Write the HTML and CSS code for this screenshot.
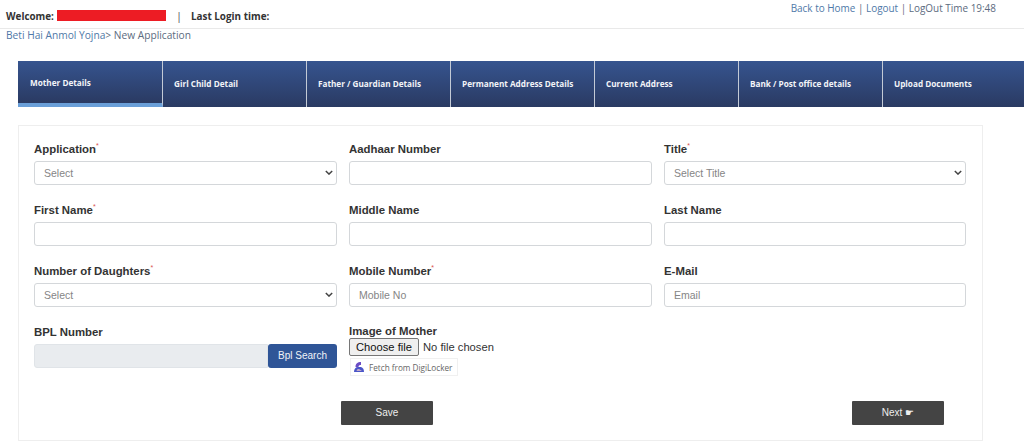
FILE: index.html
```html
<!DOCTYPE html>
<html lang="en">
<head>
    <meta charset="UTF-8">
    <title>Beti Hai Anmol Yojna - New Application</title>
    <link rel="stylesheet" href="styles.css">
</head>
<body>
<div class="topBar">
    <div class="welcome">
        <b>Welcome:</b><span class="redacted"></span><span class="sep">|</span><b>Last Login time:</b>
    </div>
    <div class="topLinks">
        <a>Back to Home</a> | <a>Logout</a> | <span>LogOut Time 19:48</span>
    </div>
</div>
<div class="crumbs"><a>Beti Hai Anmol Yojna</a>&gt; <span>New Application</span></div>

<div class="tabs">
    <div class="tab active">Mother Details</div>
    <div class="tab">Girl Child Detail</div>
    <div class="tab">Father / Guardian Details</div>
    <div class="tab">Permanent Address Details</div>
    <div class="tab">Current Address</div>
    <div class="tab">Bank / Post office details</div>
    <div class="tab">Upload Documents</div>
</div>

<div class="card">
    <div class="formGrid">
        <div class="field">
            <label>Application<sup>*</sup></label>
            <div class="control selectBox">Select<svg class="chev" viewBox="0 0 10 6"><path d="M1 1l4 4 4-4"/></svg></div>
        </div>
        <div class="field">
            <label>Aadhaar Number</label>
            <div class="control"></div>
        </div>
        <div class="field">
            <label>Title<sup>*</sup></label>
            <div class="control selectBox">Select Title<svg class="chev" viewBox="0 0 10 6"><path d="M1 1l4 4 4-4"/></svg></div>
        </div>

        <div class="field">
            <label>First Name<sup>*</sup></label>
            <div class="control"></div>
        </div>
        <div class="field">
            <label>Middle Name</label>
            <div class="control"></div>
        </div>
        <div class="field">
            <label>Last Name</label>
            <div class="control"></div>
        </div>

        <div class="field">
            <label>Number of Daughters<sup>*</sup></label>
            <div class="control selectBox">Select<svg class="chev" viewBox="0 0 10 6"><path d="M1 1l4 4 4-4"/></svg></div>
        </div>
        <div class="field">
            <label>Mobile Number<sup>*</sup></label>
            <div class="control">Mobile No</div>
        </div>
        <div class="field">
            <label>E-Mail</label>
            <div class="control">Email</div>
        </div>

        <div class="field">
            <label>BPL Number</label>
            <div class="bplRow">
                <div class="bplInput"></div>
                <div class="bplBtn">Bpl Search</div>
            </div>
        </div>
        <div class="field fileField">
            <label>Image of Mother</label>
            <div class="fileRow"><span class="fileBtn">Choose file</span><span>No file chosen</span></div>
            <div class="digi">
                <svg class="digiIcon" viewBox="0 0 10 10">
                    <path d="M1.500 5C1.500 1.500 3.500 0 7 0L7 3C5.500 3 4.500 3.500 4.500 5z" fill="#6b4cc4"/>
                    <path d="M0 10C0 7 1.500 5 4 5L7 5C9 5.500 10 7.500 10 10z" fill="#4a55c8"/>
                    <path d="M2.500 8.800C3 7.600 4 7.200 5.500 7.400L8 8.800z" fill="#e9c4c8"/>
                </svg>
                <span>Fetch from DigiLocker</span>
            </div>
        </div>
        <div class="field"></div>
    </div>

    <div class="actions">
        <div class="actBtn">Save</div>
        <div class="actBtn">Next ☛</div>
    </div>
</div>
</body>
</html>
```

FILE: styles.css
```css
* {
    box-sizing: border-box;
}

body {
    margin: 0;
    height: 442px;
    overflow: hidden;
    background-color: #fff;
    font-family: "Liberation Sans", Arial, sans-serif;
}

a {
    color: #4f79a8;
}

/* top strip */
.topBar {
    display: flex;
    justify-content: space-between;
    height: 29px;
    padding: 0 28px 0 6px;
    border-bottom: 1px solid #e9e9e9;
}

.welcome {
    display: flex;
    align-items: center;
    height: 31px;
    font-family: "Open Sans", sans-serif;
    font-size: 9.900px;
    color: #333;
}

.redacted {
    width: 109px;
    height: 11px;
    margin-left: 3px;
    background-color: #ed1c24;
}

.sep {
    margin: 0 9px 0 10px;
    font-size: 11px;
    color: #555;
}

.topLinks {
    padding-top: 1px;
    font-family: "Open Sans", sans-serif;
    font-size: 9.950px;
    line-height: 14px;
    color: #5c6b80;
}

.crumbs {
    height: 32px;
    padding: 0 6px;
    font-family: "Open Sans", sans-serif;
    font-size: 10.200px;
    line-height: 13px;
    color: #5c6b80;
}

/* tabs */
.tabs {
    display: flex;
    height: 46px;
    margin-left: 18px;
}

.tab {
    flex: none;
    width: 144px;
    height: 46px;
    padding: 16px 11px 0;
    border-right: 1px solid #c3cad6;
    background: linear-gradient(#36548f, #2a3a62);
    font-family: "Open Sans", sans-serif;
    font-size: 8.200px;
    font-weight: 700;
    line-height: 14px;
    color: #f2f4f8;
    white-space: nowrap;
}

.tab.active {
    width: 145px;
    padding: 15px 12px 0;
    border-bottom: 4px solid #6a9fd8;
}

/* form card */
.card {
    width: 965px;
    height: 316px;
    margin: 18px 0 0 18px;
    padding: 15px 15px 0;
    border: 1px solid #eee;
}

.formGrid {
    display: grid;
    grid-template-columns: 303px 303px 302px;
    column-gap: 12px;
    row-gap: 12px;
}

.field {
    height: 49px;
}

label {
    display: block;
    height: 20px;
    font-size: 11.400px;
    font-weight: 700;
    line-height: 16px;
    color: #333;
}

sup {
    font-size: 7px;
    font-weight: 400;
    line-height: 0;
    color: #d9534f;
}

.control {
    position: relative;
    height: 24px;
    padding: 0 9px;
    border: 1px solid #d4d7da;
    border-radius: 3px;
    background-color: #fff;
    font-size: 10.500px;
    line-height: 23px;
    color: #858585;
}

.chev {
    position: absolute;
    top: 8px;
    right: 3px;
    width: 8px;
    height: 5px;
    fill: none;
    stroke: #444;
    stroke-width: 1.800;
}

.bplRow {
    display: flex;
    height: 24px;
}

.bplInput {
    flex: 1;
    border: 1px solid #e0e4e8;
    border-radius: 3px 0 0 3px;
    background-color: #e9ecef;
}

.bplBtn {
    width: 69px;
    border-radius: 3px;
    background-color: #2f5597;
    font-size: 10px;
    line-height: 24px;
    text-align: center;
    color: #f0f3f8;
}

.fileField label {
    height: 14px;
    line-height: 14px;
}

.fileRow {
    display: flex;
    align-items: center;
    height: 18px;
    font-size: 11.200px;
    color: #333;
}

.fileBtn {
    height: 18px;
    margin-right: 4px;
    padding: 0 6px;
    border: 1px solid #767676;
    border-radius: 2px;
    background-color: #efefef;
    line-height: 16px;
    color: #111;
}

.digi {
    display: flex;
    align-items: center;
    width: 108px;
    height: 18px;
    margin: 2px 0 0 1px;
    padding: 0 3px;
    border: 1px solid #f0f0f0;
    font-family: "Open Sans", sans-serif;
    font-size: 8.200px;
    white-space: nowrap;
    color: #666;
}

.digiIcon {
    flex: none;
    width: 10px;
    height: 10px;
    margin-right: 5px;
}

.actions {
    display: flex;
    justify-content: space-between;
    padding: 0 23px 0 307px;
    margin-top: 28px;
}

.actBtn {
    width: 92px;
    height: 24px;
    border-radius: 1px;
    background-color: #444;
    font-size: 10px;
    line-height: 24px;
    text-align: center;
    color: #eee;
}
```
